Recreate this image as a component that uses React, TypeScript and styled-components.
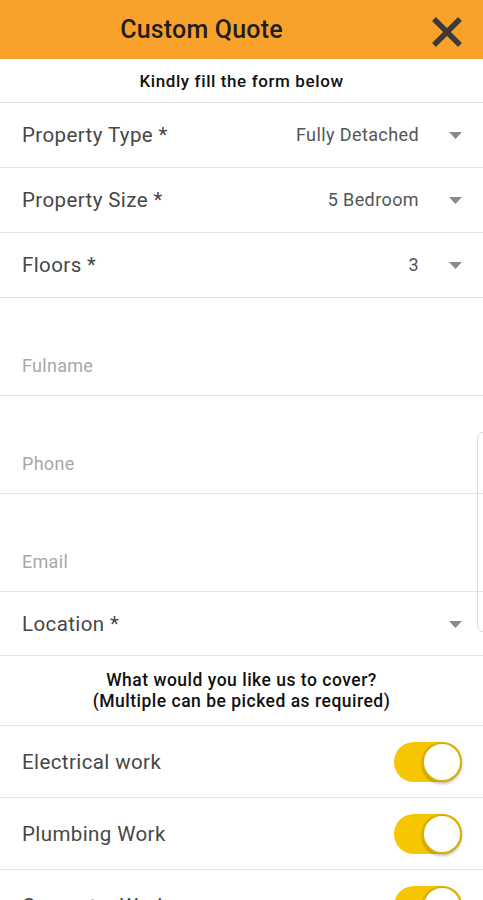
import React from "react";
import styled, { createGlobalStyle } from "styled-components";

const GlobalStyle = createGlobalStyle`
  html, body {
    margin: 0;
    padding: 0;
    background: #ffffff;
    font-family: Roboto, "Noto Sans", Arial, sans-serif;
  }
`;

const selects = [
  { label: "Property Type *", value: "Fully Detached" },
  { label: "Property Size *", value: "5 Bedroom" },
  { label: "Floors *", value: "3" },
];

const inputs = ["Fulname", "Phone", "Email"];

const services = ["Electrical work", "Plumbing Work", "Carpentry Work"];

const Caret = () => (
  <svg width="13" height="7" viewBox="0 0 13 7">
    <path d="M0 0 L13 0 L6.5 7 Z" fill="#8a8a8a" />
  </svg>
);

const App = () => {
  return (
    <Page>
      <GlobalStyle />
      <Header>
        <Title>Custom Quote</Title>
        <CloseButton aria-label="close">
          <svg width="32" height="32" viewBox="0 0 32 32">
            <path
              d="M3 3 L29 29 M29 3 L3 29"
              stroke="#3b3b3b"
              strokeWidth="5.5"
              strokeLinecap="butt"
            />
          </svg>
        </CloseButton>
      </Header>
      <Intro>Kindly fill the form below</Intro>
      {selects.map((s) => (
        <SelectRow key={s.label}>
          <Label>{s.label}</Label>
          <Value>{s.value}</Value>
          <CaretBox>
            <Caret />
          </CaretBox>
        </SelectRow>
      ))}
      {inputs.map((p) => (
        <InputRow key={p}>
          <Placeholder>{p}</Placeholder>
        </InputRow>
      ))}
      <SelectRow $height={63}>
        <Label>Location *</Label>
        <Value />
        <CaretBox>
          <Caret />
        </CaretBox>
      </SelectRow>
      <Question>
        What would you like us to cover?
        <br />
        (Multiple can be picked as required)
      </Question>
      {services.map((s) => (
        <ToggleRow key={s}>
          <Label>{s}</Label>
          <Switch>
            <Knob />
          </Switch>
        </ToggleRow>
      ))}
      <ScrollHint />
    </Page>
  );
};

const Page = styled.div`
  position: relative;
  width: 483px;
  height: 900px;
  overflow: hidden;
  background: #ffffff;
`;

const Header = styled.div`
  height: 59px;
  background: #f9a22b;
  display: flex;
  align-items: center;
  justify-content: center;
  position: relative;
`;

const Title = styled.div`
  font-size: 25px;
  font-weight: 500;
  color: #1f1f1f;
  letter-spacing: 0.2px;
  margin-left: -80px;
`;

const CloseButton = styled.div`
  position: absolute;
  right: 20px;
  top: 16px;
  width: 32px;
  height: 32px;
`;

const Intro = styled.div`
  height: 43px;
  display: flex;
  align-items: center;
  justify-content: center;
  font-size: 17px;
  font-weight: 500;
  letter-spacing: 0.6px;
  color: #111;
  border-bottom: 1px solid #e2e2e2;
`;

const SelectRow = styled.div<{ $height?: number }>`
  height: ${({ $height }) => $height ?? 64}px;
  display: flex;
  align-items: center;
  padding: 0 21px 0 22px;
  border-bottom: 1px solid #e2e2e2;
`;

const Label = styled.div`
  flex: 1;
  font-size: 20.5px;
  letter-spacing: 0.4px;
  color: #474747;
`;

const Value = styled.div`
  font-size: 18px;
  letter-spacing: 0.4px;
  color: #555;
  margin-right: 30px;
  margin-top: -2px;
`;

const CaretBox = styled.div`
  display: flex;
  align-items: center;
  margin-top: 1px;
`;

const InputRow = styled.div`
  height: 98px;
  display: flex;
  align-items: flex-end;
  padding: 0 22px 19px;
  box-sizing: border-box;
  border-bottom: 1px solid #e2e2e2;
`;

const Placeholder = styled.div`
  font-size: 18px;
  letter-spacing: 0.3px;
  color: #a8a8a8;
`;

const Question = styled.div`
  height: 69px;
  display: flex;
  align-items: center;
  justify-content: center;
  text-align: center;
  font-size: 17.5px;
  line-height: 21px;
  font-weight: 500;
  letter-spacing: 0.5px;
  color: #111;
  border-bottom: 1px solid #e2e2e2;
`;

const ToggleRow = styled.div`
  height: 71px;
  display: flex;
  align-items: center;
  padding: 0 21px 0 22px;
  border-bottom: 1px solid #e2e2e2;
`;

const Switch = styled.div`
  width: 68px;
  height: 40px;
  border-radius: 20px;
  background: #f7c600;
  display: flex;
  align-items: center;
  justify-content: flex-end;
`;

const Knob = styled.div`
  width: 36px;
  height: 36px;
  border-radius: 50%;
  background: #fff;
  border: 2px solid #d9b000;
  box-shadow: 0 2px 3px rgba(0, 0, 0, 0.25);
`;

const ScrollHint = styled.div`
  position: absolute;
  right: -6px;
  top: 432px;
  width: 10px;
  height: 198px;
  border: 1px solid #dcdcdc;
  border-radius: 6px;
`;

export default App;
